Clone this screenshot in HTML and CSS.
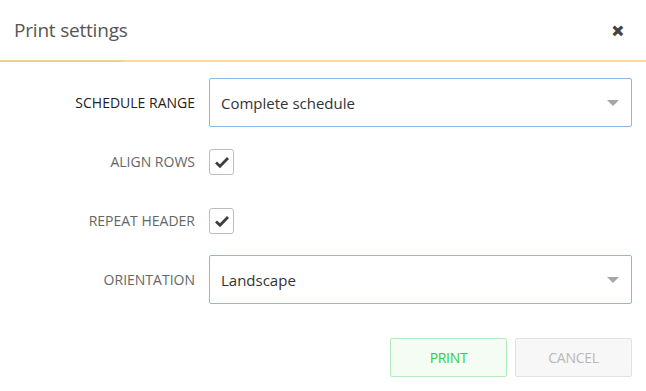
FILE: index.html
```html
<!DOCTYPE html>
<html lang="en">
<head>
  <meta charset="UTF-8">
  <title>Print settings</title>
  <link rel="stylesheet" href="styles.css">
</head>
<body>

  <div class="dialog">
    <div class="dialog-header">
      <span class="dialog-title">Print settings</span>
      <span class="dialog-close">&#x2715;</span>
    </div>
    <div class="dialog-line"><div class="dialog-line-fill"></div></div>

    <div class="dialog-body">
      <div class="form-grid">
        <label class="field-label active">SCHEDULE RANGE</label>
        <div class="select">
          <span>Complete schedule</span>
          <span class="caret"></span>
        </div>

        <label class="field-label">ALIGN ROWS</label>
        <div class="check-cell">
          <span class="checkbox">
            <svg width="16" height="14" viewBox="0 0 16 14"><path d="M2 7.5 L6 11.2 L14 3" fill="none" stroke="#3f3f3f" stroke-width="2.8"/></svg>
          </span>
        </div>

        <label class="field-label">REPEAT HEADER</label>
        <div class="check-cell">
          <span class="checkbox">
            <svg width="16" height="14" viewBox="0 0 16 14"><path d="M2 7.5 L6 11.2 L14 3" fill="none" stroke="#3f3f3f" stroke-width="2.8"/></svg>
          </span>
        </div>

        <label class="field-label">ORIENTATION</label>
        <div class="select">
          <span>Landscape</span>
          <span class="caret"></span>
        </div>
      </div>

      <!-- 下のボタン -->
      <div class="dialog-buttons">
        <button class="btn btn-print">PRINT</button>
        <button class="btn btn-cancel">CANCEL</button>
      </div>
    </div>
  </div>

</body>
</html>
```

FILE: styles.css
```css
body {
  margin: 0;
  background: #fff;
  font-family: "Open Sans", "Noto Sans", sans-serif;
}

.dialog {
  width: 646px;
  height: 391px;
  background: #fff;
}

.dialog-header {
  height: 60px;
  display: flex;
  align-items: center;
  justify-content: space-between;
  padding: 0 22px 0 14px;
}

.dialog-title {
  font-size: 19px;
  color: #555;
  letter-spacing: -0.2px;
}

.dialog-close {
  font-size: 14px;
  font-weight: bold;
  color: #444;
  -webkit-text-stroke: 1.2px #444;
}

/* ヘッダー下のライン */
.dialog-line {
  height: 2px;
  background: #ffd98f;
}

.dialog-line-fill {
  width: 123px;
  height: 2px;
  background: #e8d48c;
}

.dialog-body {
  padding: 16px 14px 0 0;
}

.form-grid {
  display: grid;
  grid-template-columns: 195px 1fr;
  grid-auto-rows: 49px;
  column-gap: 14px;
  row-gap: 10px;
  align-items: center;
}

.field-label {
  text-align: right;
  font-size: 14px;
  color: #666;
}

.field-label.active {
  color: #222;
}

.select {
  height: 49px;
  box-sizing: border-box;
  border: 1px solid #8bb8e2;
  border-radius: 2px;
  display: flex;
  align-items: center;
  justify-content: space-between;
  padding: 0 12px 0 11px;
  font-size: 15px;
  color: #333;
}

.caret {
  width: 0;
  height: 0;
  border-left: 6px solid transparent;
  border-right: 6px solid transparent;
  border-top: 6px solid #a6a6a6;
}

.check-cell {
  display: flex;
  align-items: center;
}

.checkbox {
  width: 25px;
  height: 26px;
  box-sizing: border-box;
  border: 1px solid #bdbdbd;
  border-radius: 3px;
  display: flex;
  align-items: center;
  justify-content: center;
}

.dialog-buttons {
  display: flex;
  justify-content: flex-end;
  gap: 8px;
  margin-top: 34px;
}

.btn {
  width: 117px;
  height: 39px;
  border-radius: 2px;
  font-family: "Open Sans", "Noto Sans", sans-serif;
  font-size: 14px;
  letter-spacing: -0.3px;
  cursor: pointer;
}

.btn-print {
  background: #f4fcf4;
  border: 1px solid #b4ebbb;
  color: #33cc44;
}

.btn-cancel {
  background: #f7f7f7;
  border: 1px solid #e2e2e2;
  color: #b8b8b8;
}
```
